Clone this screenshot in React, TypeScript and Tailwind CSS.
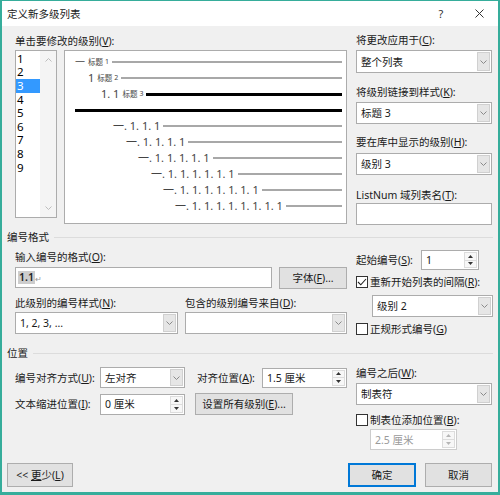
import React from "react";

const FONT = "font-['Noto_Sans','Noto_Sans_CJK_SC',sans-serif]";

function Key({ pre, k, post = "):" }: { pre: string; k: string; post?: string }) {
  return (
    <span className="whitespace-nowrap">
      {pre}(<span className="underline underline-offset-[1px]">{k}</span>
      {post}
    </span>
  );
}

function Chevron({ color = "#8a8a8a" }: { color?: string }) {
  return (
    <svg width="7" height="4" viewBox="0 0 7 4">
      <path d="M0.5 0.5 L3.5 3.5 L6.5 0.5" fill="none" stroke={color} strokeWidth="1" />
    </svg>
  );
}

function Select({ text, className = "" }: { text?: string; className?: string }) {
  return (
    <div className={`flex bg-white border border-[#acacac] ${className}`}>
      <div className="flex-1 flex items-center pl-[4px] whitespace-nowrap">{text}</div>
      <div className="w-[13px] my-[1px] mr-[1px] bg-[#e6e6e6] border border-[#d0d0d0] flex items-center justify-center">
        <Chevron />
      </div>
    </div>
  );
}

function Spin({ text, className = "", disabled = false }: { text: string; className?: string; disabled?: boolean }) {
  const tri = disabled ? "#b5b5b5" : "#333";
  return (
    <div
      className={`flex bg-white border ${disabled ? "border-[#cccccc] text-[#9a9a9a]" : "border-[#acacac]"} ${className}`}
    >
      <div className="flex-1 flex items-center pl-[4px] whitespace-nowrap">{text}</div>
      <div className="w-[13px] my-[1px] mr-[1px] flex flex-col border border-[#dcdcdc] bg-[#f7f7f7]">
        <div className="flex-1 flex items-center justify-center border-b border-[#dcdcdc]">
          <svg width="5" height="3" viewBox="0 0 5 3">
            <path d="M0 3 L2.5 0 L5 3Z" fill={tri} />
          </svg>
        </div>
        <div className="flex-1 flex items-center justify-center">
          <svg width="5" height="3" viewBox="0 0 5 3">
            <path d="M0 0 L2.5 3 L5 0Z" fill={tri} />
          </svg>
        </div>
      </div>
    </div>
  );
}

function Check({ checked = false }: { checked?: boolean }) {
  return (
    <div className="w-[12px] h-[12px] shrink-0 border border-[#333333] bg-white flex items-center justify-center">
      {checked && (
        <svg width="10" height="8" viewBox="0 0 10 8">
          <path d="M1 4 L3.8 6.8 L9 1" fill="none" stroke="#222" strokeWidth="1.1" />
        </svg>
      )}
    </div>
  );
}

function Btn({ children, className = "" }: { children: React.ReactNode; className?: string }) {
  return (
    <div className={`flex items-center justify-center bg-[#e1e1e1] whitespace-nowrap ${className}`}>{children}</div>
  );
}

function Heading({ title }: { title: string }) {
  return (
    <div className="h-[14px] flex items-center pl-[5px] pr-[5px]">
      <span>{title}</span>
      <div className="flex-1 h-px bg-[#dcdcdc] ml-[5px]" />
    </div>
  );
}

type Row = { pad: string; main?: string; sub?: string; n?: string; selected?: boolean };

const rows: Row[] = [
  { pad: "pl-[10px]", main: "一", sub: "标题", n: "1" },
  { pad: "pl-[23px]", main: "1", sub: "标题", n: "2" },
  { pad: "pl-[36px]", main: "1. 1", sub: "标题", n: "3", selected: true },
  { pad: "pl-[10px]", selected: true },
  { pad: "pl-[48px]", main: "一. 1. 1. 1" },
  { pad: "pl-[61px]", main: "一. 1. 1. 1. 1" },
  { pad: "pl-[73px]", main: "一. 1. 1. 1. 1. 1" },
  { pad: "pl-[86px]", main: "一. 1. 1. 1. 1. 1. 1" },
  { pad: "pl-[98px]", main: "一. 1. 1. 1. 1. 1. 1. 1" },
  { pad: "pl-[110px]", main: "一. 1. 1. 1. 1. 1. 1. 1. 1" },
];

function Preview() {
  return (
    <div className="w-[283px] h-[174px] bg-white border border-[#acacac] pt-[3px] pr-[4px] flex flex-col text-[#444444]">
      {rows.map((r, i) => (
        <div key={i} className={`h-[16px] flex items-center ${r.pad}`}>
          {r.main && (
            <span className={`whitespace-nowrap ${i === 0 ? "text-[10px]" : "text-[11px]"} leading-[16px]`}>
              {r.main}
            </span>
          )}
          {r.sub && <span className="text-[7.5px] ml-[3px] leading-[16px]">{r.sub}</span>}
          {r.n && <span className="text-[7px] ml-[2px] leading-[16px]">{r.n}</span>}
          <div
            className={`flex-1 ${r.main ? "ml-[3px]" : ""} ${r.selected ? "h-[3px] bg-black" : "h-[2px] bg-[#a8a8a8]"}`}
          />
        </div>
      ))}
    </div>
  );
}

function LevelList() {
  const items = ["1", "2", "3", "4", "5", "6", "7", "8", "9"];
  return (
    <div className="w-[42px] h-[168px] bg-white border border-[#acacac] flex">
      <div className="w-[24px] pt-[1px] flex flex-col">
        {items.map((n) => (
          <div
            key={n}
            className={`h-[13.6px] flex items-center pl-[1px] text-[11.5px] ${
              n === "3" ? "bg-[#3399ff] text-white" : "text-black"
            }`}
          >
            {n}
          </div>
        ))}
      </div>
      <div className="flex-1 bg-[#f4f4f4] flex flex-col items-center justify-between py-[7px]">
        <svg width="7" height="4" viewBox="0 0 7 4">
          <path d="M0.5 3.5 L3.5 0.5 L6.5 3.5" fill="none" stroke="#bdbdbd" strokeWidth="1" />
        </svg>
        <Chevron color="#bdbdbd" />
      </div>
    </div>
  );
}

export default function App() {
  return (
    <div
      className={`w-[500px] h-[495px] bg-[#f0f0f0] border-x-2 border-b-[3px] border-t border-[#36ad9b] flex flex-col text-[10.5px] leading-[14px] text-[#1a1a1a] ${FONT}`}
    >
      {/* title bar */}
      <div className="h-[25px] bg-white flex items-center pl-[5px] shrink-0">
        <span className="text-[10.5px]">定义新多级列表</span>
        <div className="flex-1" />
        <span className="w-[10px] text-center text-[11px] text-[#333]">?</span>
        <div className="w-[29px]" />
        <svg width="9" height="9" viewBox="0 0 9 9" className="mr-[14px]">
          <path d="M0.5 0.5 L8.5 8.5 M8.5 0.5 L0.5 8.5" stroke="#333" strokeWidth="1" />
        </svg>
      </div>

      {/* level selection + preview */}
      <div className="h-[202px] flex shrink-0">
        <div className="ml-[13px] flex flex-col">
          <div className="mt-[8px]">
            <Key pre="单击要修改的级别" k="V" />
          </div>
          <div className="mt-[2px] flex gap-[7px] items-start">
            <LevelList />
            <Preview />
          </div>
        </div>
        <div className="ml-[9px] w-[136px] flex flex-col">
          <div className="mt-[7px]">
            <Key pre="将更改应用于" k="C" />
          </div>
          <Select text="整个列表" className="mt-[3px] h-[23px]" />
          <div className="mt-[12px]">
            <Key pre="将级别链接到样式" k="K" />
          </div>
          <Select text="标题 3" className="mt-[3px] h-[22px]" />
          <div className="mt-[11px]">
            <Key pre="要在库中显示的级别" k="H" />
          </div>
          <Select text="级别 3" className="mt-[4px] h-[22px]" />
          <div className="mt-[13px]">
            <Key pre="ListNum 域列表名" k="T" />
          </div>
          <div className="mt-[1px] h-[22px] bg-white border border-[#acacac]" />
        </div>
      </div>

      <div className="mt-[2px]">
        <Heading title="编号格式" />
      </div>

      {/* number format */}
      <div className="h-[102px] flex shrink-0">
        <div className="ml-[13px] w-[332px] flex flex-col">
          <div className="mt-[6px]">
            <Key pre="输入编号的格式" k="O" />
          </div>
          <div className="mt-[3px] flex items-start">
            <div className="w-[257px] h-[21px] bg-white border border-[#acacac] flex items-center pl-[2px]">
              <span className="bg-[#cdcdcd] font-semibold text-[10.5px] leading-[13px] px-[1px] text-[#222]">1.1</span>
              <span className="text-[8px] text-[#999] leading-[10px] mt-[3px]">↵</span>
            </div>
            <Btn className="ml-[7px] w-[68px] h-[22px] border border-[#adadad]">
              <Key pre="字体" k="F" post=")..." />
            </Btn>
          </div>
          <div className="mt-[7px] flex">
            <div className="w-[170px]">
              <Key pre="此级别的编号样式" k="N" />
            </div>
            <div>
              <Key pre="包含的级别编号来自" k="D" />
            </div>
          </div>
          <div className="mt-[2px] flex gap-[7px]">
            <Select text="1, 2, 3, ..." className="w-[163px] h-[22px]" />
            <Select className="w-[163px] h-[22px]" />
          </div>
        </div>
        <div className="ml-[9px] w-[137px] flex flex-col">
          <div className="mt-[6px] flex items-center h-[20px]">
            <div className="w-[65px]">
              <Key pre="起始编号" k="S" />
            </div>
            <Spin text="1" className="w-[58px] h-[20px]" />
          </div>
          <div className="mt-[5px] h-[14px] flex items-center gap-[2px]">
            <Check checked />
            <Key pre="重新开始列表的间隔" k="R" />
          </div>
          <Select text="级别 2" className="mt-[6px] ml-[16px] w-[121px] h-[22px]" />
          <div className="mt-[5px] h-[14px] flex items-center gap-[2px]">
            <Check />
            <Key pre="正规形式编号" k="G" post=")" />
          </div>
        </div>
      </div>

      <Heading title="位置" />

      {/* position */}
      <div className="h-[103px] flex shrink-0">
        <div className="ml-[13px] w-[332px] flex flex-col">
          <div className="mt-[7px] h-[21px] flex items-center">
            <div className="w-[85px]">
              <Key pre="编号对齐方式" k="U" />
            </div>
            <Select text="左对齐" className="w-[85px] h-[21px]" />
            <div className="ml-[12px] w-[65px]">
              <Key pre="对齐位置" k="A" />
            </div>
            <Spin text="1.5 厘米" className="w-[85px] h-[20px]" />
          </div>
          <div className="mt-[5px] h-[22px] flex items-center">
            <div className="w-[85px]">
              <Key pre="文本缩进位置" k="I" />
            </div>
            <Spin text="0 厘米" className="w-[85px] h-[21px]" />
            <Btn className="ml-[10px] w-[98px] h-[22px] border border-[#adadad]">
              <Key pre="设置所有级别" k="E" post=")..." />
            </Btn>
          </div>
        </div>
        <div className="ml-[9px] w-[137px] flex flex-col">
          <div className="mt-[6px]">
            <Key pre="编号之后" k="W" />
          </div>
          <Select text="制表符" className="mt-[3px] w-[136px] h-[22px]" />
          <div className="mt-[8px] h-[14px] flex items-center gap-[2px]">
            <Check />
            <Key pre="制表位添加位置" k="B" />
          </div>
          <Spin text="2.5 厘米" disabled className="mt-[2px] ml-[14px] w-[87px] h-[21px]" />
        </div>
      </div>

      {/* dialog buttons */}
      <div className="h-[24px] flex shrink-0">
        <Btn className="ml-[5px] w-[66px] h-[24px] border border-[#adadad]">
          <span>
            &lt;&lt; <span className="underline underline-offset-[1px]">更</span>少(
            <span className="underline underline-offset-[1px]">L</span>)
          </span>
        </Btn>
        <div className="flex-1" />
        <Btn className="w-[68px] h-[24px] border-2 border-[#0078d7]">确定</Btn>
        <Btn className="ml-[9px] mr-[6px] w-[67px] h-[24px] border border-[#adadad]">取消</Btn>
      </div>
      <div className="flex-1" />
    </div>
  );
}
